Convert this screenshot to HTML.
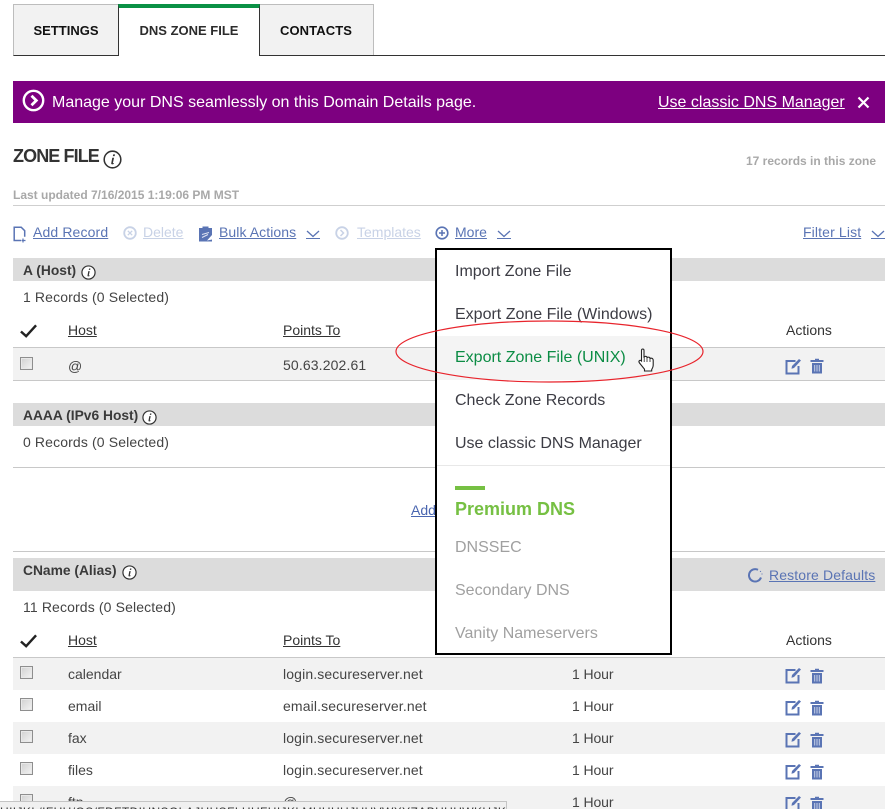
<!DOCTYPE html>
<html><head><meta charset="utf-8">
<style>
html,body{margin:0;padding:0;background:#fff}
#p{position:relative;width:886px;height:809px;overflow:hidden;font-family:"Liberation Sans",sans-serif;font-size:14px;color:#444}
#p div,#p span.t,#p a,#p svg{position:absolute}
.t,a{white-space:nowrap;line-height:20px}
a{color:#5a74b4;text-decoration:underline}
.f{color:#c8d2e6}
.tab{font-weight:bold;font-size:13px;color:#111;text-align:center;box-sizing:border-box}
.g{background:#dcdcdc;left:13px;width:872px}
.l{background:#c8c8c8;height:1px;left:13px;width:872px}
.r{background:#f2f2f2;left:13px;width:872px;height:32px}
.b{font-weight:bold;color:#3a3a3a;font-size:13.8px}
.u{text-decoration:underline;color:#333}
.s{letter-spacing:.13px}
.c{width:11px;height:11px;background:linear-gradient(135deg,#d0d0d0,#f4f4f4);border:1px solid #8e8e8e;left:20px;box-shadow:inset 0 0 0 1px #e8e8e8}
.m{font-size:16px;color:#3c3c44;left:455px}
.d{font-size:16px;color:#a0a0a0;left:455px}
</style></head><body><div id="p">
<svg width="0" height="0" style="left:0;top:0"><defs>
<symbol id="ed" viewBox="0 0 17 17"><path d="M10.500 3H1.500v12.500h12V8" fill="none" stroke="#5a74b4" stroke-width="2"/><path d="M6.500 10.800L7 8l7-7 2 1.500-7 7.500z" fill="#5a74b4"/></symbol>
<symbol id="tr" viewBox="0 0 14 16"><path d="M5 2V.8h4V2h4.500v2H.5V2z" fill="#5a74b4"/><path d="M2 5h10v10.500H2z" fill="#5a74b4"/><path d="M4.700 7v6.500M7 7v6.500M9.300 7v6.500" stroke="#c9d2e8" stroke-width="1"/></symbol>
<symbol id="inf" viewBox="0 0 16 16"><circle cx="8" cy="8" r="7" fill="#fff" stroke="#333" stroke-width="1.300"/><path d="M8.600 3.700h1.500l-.3 1.500H8.300zM7.800 6.500h1.500L8.300 11.200l.9-.3-.2.900c-.8.400-2.200.500-2.100-.5z" fill="#333"/></symbol>
<symbol id="ch" viewBox="0 0 14 8"><path d="M1 1l6 5.500L13 1" fill="none" stroke="#5a74b4" stroke-width="1.300"/></symbol>
<symbol id="ck" viewBox="0 0 18 14"><path d="M1 7.500L6.500 12.500 17 1" fill="none" stroke="#222" stroke-width="2.600"/></symbol>
</defs></svg>

<!-- Tabs -->
<div class="tab" style="left:13px;top:4px;width:106px;height:52px;background:#f2f2f2;border:1px solid #bdbdbd;border-bottom:1px solid #333;line-height:51px">SETTINGS</div>
<div class="tab" style="left:259px;top:4px;width:115px;height:52px;background:#f2f2f2;border:1px solid #bdbdbd;border-left:0;border-bottom:1px solid #333;line-height:51px;letter-spacing:.1px">CONTACTS</div>
<div class="tab" style="left:118px;top:4px;width:142px;height:52px;background:#fff;border-left:1px solid #333;border-right:1px solid #333;border-top:4px solid #0a9145;line-height:45px;color:#2c2c2c">DNS ZONE FILE</div>
<div style="left:373px;top:55px;width:512px;height:1px;background:#333"></div>

<!-- Banner -->
<div style="left:13px;top:81px;width:872px;height:42px;background:#7d0080"></div>
<svg style="left:22px;top:89px" width="23" height="23" viewBox="0 0 23 23"><circle cx="11.500" cy="11.500" r="9.700" fill="none" stroke="#fff" stroke-width="2.400"/><path d="M9.500 6.800l4.800 4.700-4.800 4.700" fill="none" stroke="#fff" stroke-width="2.800"/></svg>
<span class="t" style="left:52px;top:93px;font-size:16px;color:#fff">Manage your DNS seamlessly on this Domain Details page.</span>
<a style="left:658px;top:93px;font-size:16px;color:#fff">Use classic DNS Manager</a>
<svg style="left:857px;top:96px" width="13" height="13" viewBox="0 0 13 13"><path d="M1.500 1.500l10 10M11.500 1.500l-10 10" stroke="#fff" stroke-width="2.200"/></svg>

<!-- Title -->
<span class="t" style="left:13px;top:146px;font-size:18px;font-weight:bold;color:#333;letter-spacing:-.9px">ZONE FILE</span>
<svg style="left:103px;top:150px" width="19" height="19"><use href="#inf"/></svg>
<span class="t" style="left:746px;top:151px;font-size:12px;font-weight:bold;color:#a8a8a8">17 records in this zone</span>
<span class="t" style="left:13px;top:185px;font-size:12px;font-weight:bold;color:#a8a8a8">Last updated 7/16/2015 1:19:06 PM MST</span>
<div style="left:13px;top:205px;width:872px;height:1px;background:#cfcfcf"></div>

<!-- Toolbar -->
<svg style="left:13px;top:226px" width="14" height="17" viewBox="0 0 14 17"><path d="M8 14.500H1.200V1.200h7l3.500 3.500v6" fill="none" stroke="#5a74b4" stroke-width="1.500"/><path d="M10 12.500v4M8.500 14.500h4" stroke="#5a74b4" stroke-width="1.200"/></svg>
<a class="s" style="left:33px;top:222px">Add Record</a>
<svg style="left:123px;top:226px" width="14" height="14" viewBox="0 0 14 14"><circle cx="7" cy="7" r="5.800" fill="none" stroke="#c8d2e6" stroke-width="1.800"/><path d="M4.800 4.800l4.400 4.400M9.200 4.800l-4.400 4.400" stroke="#c8d2e6" stroke-width="1.300"/></svg>
<a class="f" style="left:143px;top:222px">Delete</a>
<svg style="left:199px;top:226px" width="15" height="16" viewBox="0 0 15 16"><path d="M0 2h3.500V.5h6V2H13v7l-5 5.500 5-1V15.500H0z" fill="#5a74b4"/><path d="M3 8.500l7-2M3 11.500l6-3" stroke="#dfe4f2" stroke-width="1"/></svg>
<a style="left:219px;top:222px;letter-spacing:.08px">Bulk Actions</a>
<svg style="left:306px;top:229px" width="14" height="10"><use href="#ch"/></svg>
<div style="left:306px;top:238px;width:14px;height:1px;background:#5a74b4"></div>
<svg style="left:335px;top:226px" width="14" height="14" viewBox="0 0 14 14"><circle cx="7" cy="7" r="5.800" fill="none" stroke="#c8d2e6" stroke-width="1.800"/><path d="M5.500 4l3 3-3 3" fill="none" stroke="#c8d2e6" stroke-width="1.500"/></svg>
<a class="f" style="left:357px;top:222px">Templates</a>
<svg style="left:435px;top:226px" width="14" height="14" viewBox="0 0 14 14"><circle cx="7" cy="7" r="5.800" fill="none" stroke="#5a74b4" stroke-width="1.600"/><path d="M7 4v6M4 7h6" stroke="#5a74b4" stroke-width="1.500"/></svg>
<a style="left:455px;top:222px">More</a>
<svg style="left:497px;top:229px" width="14" height="10"><use href="#ch"/></svg>
<div style="left:497px;top:238px;width:14px;height:1px;background:#5a74b4"></div>
<a class="s" style="left:803px;top:222px">Filter List</a>
<svg style="left:871px;top:229px" width="14" height="10"><use href="#ch"/></svg>
<div style="left:871px;top:238px;width:14px;height:1px;background:#5a74b4"></div>

<!-- A Host -->
<div class="g" style="top:258px;height:23px"></div>
<span class="t b" style="left:23px;top:261px">A (Host)</span>
<svg style="left:81px;top:265px" width="15" height="15"><use href="#inf"/></svg>
<span class="t s" style="left:23px;top:287px">1 Records (0 Selected)</span>
<svg style="left:20px;top:324px" width="17" height="14"><use href="#ck"/></svg>
<span class="t u" style="left:68px;top:320px">Host</span>
<span class="t u" style="left:283px;top:320px">Points To</span>
<span class="t" style="left:786px;top:320px;color:#333">Actions</span>
<div class="l" style="top:347px"></div>
<div class="r" style="top:348px"></div>
<div class="l" style="top:380px"></div>
<div class="c" style="top:357px"></div>
<span class="t" style="left:68px;top:356px">@</span>
<span class="t s" style="left:283px;top:355px">50.63.202.61</span>
<svg style="left:785px;top:358px" width="17" height="17"><use href="#ed"/></svg>
<svg style="left:810px;top:358px" width="14" height="16"><use href="#tr"/></svg>

<!-- AAAA -->
<div class="g" style="top:403px;height:23px"></div>
<span class="t b" style="left:23px;top:406px">AAAA (IPv6 Host)</span>
<svg style="left:142px;top:410px" width="15" height="15"><use href="#inf"/></svg>
<span class="t s" style="left:23px;top:432px">0 Records (0 Selected)</span>
<div class="l" style="top:467px"></div>
<a style="left:411px;top:500px;color:#4a66b0">Add</a>
<div class="l" style="top:551px"></div>

<!-- CName -->
<div class="g" style="top:558px;height:33px"></div>
<span class="t b" style="left:23px;top:561px">CName (Alias)</span>
<svg style="left:122px;top:565px" width="15" height="15"><use href="#inf"/></svg>
<svg style="left:747px;top:567px" width="16" height="16" viewBox="0 0 16 16"><path d="M11 2.800A6.200 6.200 0 1 0 14 10.500" fill="none" stroke="#5a74b4" stroke-width="2"/><path d="M13 4.200l1 .5M14.500 7h1" stroke="#5a74b4" stroke-width="1"/></svg>
<a class="s" style="left:769px;top:565px;font-size:14px">Restore Defaults</a>
<span class="t s" style="left:23px;top:597px">11 Records (0 Selected)</span>
<svg style="left:20px;top:634px" width="17" height="14"><use href="#ck"/></svg>
<span class="t u" style="left:68px;top:630px">Host</span>
<span class="t u" style="left:283px;top:630px">Points To</span>
<span class="t" style="left:786px;top:630px;color:#333">Actions</span>
<div class="l" style="top:657px"></div>

<div class="r" style="top:658px"></div>
<div class="r" style="top:722px"></div>
<div class="r" style="top:786px"></div>

<div class="c" style="top:666px"></div>
<span class="t" style="left:68px;top:664px">calendar</span>
<span class="t s" style="left:283px;top:664px">login.secureserver.net</span>
<span class="t" style="left:572px;top:664px;letter-spacing:-.1px">1 Hour</span>
<svg style="left:785px;top:667px" width="17" height="17"><use href="#ed"/></svg>
<svg style="left:810px;top:668px" width="14" height="16"><use href="#tr"/></svg>

<div class="c" style="top:698px"></div>
<span class="t" style="left:68px;top:696px">email</span>
<span class="t s" style="left:283px;top:696px">email.secureserver.net</span>
<span class="t" style="left:572px;top:696px;letter-spacing:-.1px">1 Hour</span>
<svg style="left:785px;top:699px" width="17" height="17"><use href="#ed"/></svg>
<svg style="left:810px;top:700px" width="14" height="16"><use href="#tr"/></svg>

<div class="c" style="top:730px"></div>
<span class="t" style="left:68px;top:728px">fax</span>
<span class="t s" style="left:283px;top:728px">login.secureserver.net</span>
<span class="t" style="left:572px;top:728px;letter-spacing:-.1px">1 Hour</span>
<svg style="left:785px;top:731px" width="17" height="17"><use href="#ed"/></svg>
<svg style="left:810px;top:732px" width="14" height="16"><use href="#tr"/></svg>

<div class="c" style="top:762px"></div>
<span class="t" style="left:68px;top:760px">files</span>
<span class="t s" style="left:283px;top:760px">login.secureserver.net</span>
<span class="t" style="left:572px;top:760px;letter-spacing:-.1px">1 Hour</span>
<svg style="left:785px;top:763px" width="17" height="17"><use href="#ed"/></svg>
<svg style="left:810px;top:764px" width="14" height="16"><use href="#tr"/></svg>

<div class="c" style="top:794px"></div>
<span class="t" style="left:68px;top:792px">ftp</span>
<span class="t" style="left:283px;top:792px">@</span>
<span class="t" style="left:572px;top:792px;letter-spacing:-.1px">1 Hour</span>
<svg style="left:785px;top:795px" width="17" height="17"><use href="#ed"/></svg>
<svg style="left:810px;top:796px" width="14" height="16"><use href="#tr"/></svg>

<!-- Dropdown -->
<div style="left:435px;top:248px;width:233px;height:403px;background:#fff;border:2px solid #000"></div>
<div style="left:437px;top:336px;width:233px;height:44px;background:#f4f4f4"></div>
<div style="left:437px;top:465px;width:233px;height:1px;background:#e8e8e8"></div>
<span class="t m" style="top:262px">Import Zone File</span>
<span class="t m" style="top:305px">Export Zone File (Windows)</span>
<span class="t m" style="top:348px;color:#0b8c44">Export Zone File (UNIX)</span>
<span class="t m" style="top:391px">Check Zone Records</span>
<span class="t m" style="top:434px">Use classic DNS Manager</span>
<div style="left:455px;top:486px;width:30px;height:4px;background:#76c043"></div>
<span class="t" style="left:455px;top:499px;font-size:18px;font-weight:bold;color:#76c043">Premium DNS</span>
<span class="t d" style="top:538px">DNSSEC</span>
<span class="t d" style="top:581px">Secondary DNS</span>
<span class="t d" style="top:624px">Vanity Nameservers</span>

<!-- Red ellipse -->
<svg style="left:394px;top:318px" width="312" height="68"><ellipse cx="155.500" cy="33.500" rx="153.500" ry="30.500" fill="none" stroke="#e8242c" stroke-width="1.200"/></svg>

<!-- Hand cursor -->
<svg style="left:636px;top:348px" width="20" height="25" viewBox="0 0 20 25"><path d="M5.500 2.500c0-2 2.500-2 2.500 0V9l1-.5c1-.5 2 0 2 1l1-.3c1-.3 2 .3 2 1.200l1-.2c1.200-.2 2.200.8 2.200 2v5c0 2-.8 3-1.500 4.300v1.500H8.500v-1.800L3.500 15c-1.500-2 .5-3.500 2-2z" fill="#fff" stroke="#222" stroke-width="1.100"/><path d="M8.200 9v5M11 9.500v4.500M14 10.500v3.500" stroke="#222" stroke-width=".8"/></svg>

<!-- Status bar -->
<div style="left:0;top:801px;width:507px;height:8px;background:#f0f0f0;border-top:1px solid #c4c4c4;border-right:1px solid #c4c4c4;box-sizing:border-box;overflow:hidden">
<span class="t" style="left:0;top:3px;font-size:12px;line-height:14px;color:#333;letter-spacing:.4px">HIIJKL/IFUH/QS/FDFTDIUNSOLAJHHSFLHUFHIJKLMHHUHJUHVWXYZABHUHWKHJKHSFHSJHKHJHSHKUJHJH</span>
</div>
</div></body></html>
